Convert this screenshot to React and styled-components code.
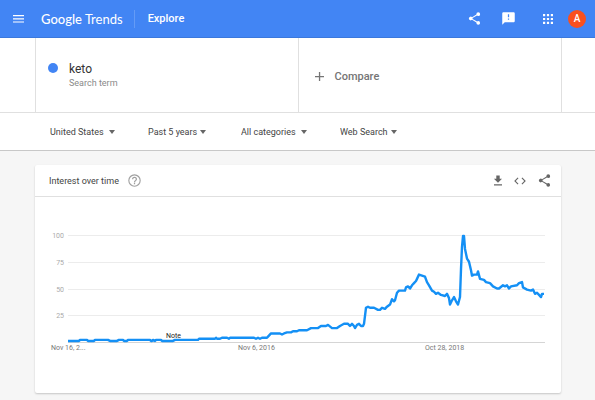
import React, { useState } from "react";
import styled, { createGlobalStyle } from "styled-components";

const GlobalStyle = createGlobalStyle`
  * {
    box-sizing: border-box;
  }
  body {
    margin: 0;
    background: #f6f6f6;
    color: #3c3c3c;
    font-family: Roboto, "Liberation Sans", sans-serif;
  }
  button, select {
    font-family: inherit;
  }
`;

const FILTERS = [
  { label: "Region", value: "United States", width: 59, cell: 98 },
  { label: "Time", value: "Past 5 years", width: 52, cell: 93 },
  { label: "Category", value: "All categories", width: 60, cell: 99 },
  { label: "Search type", value: "Web Search", width: 51, cell: 80 },
];

// [distance along the time axis, interest value]
const SERIES = [
  [0, 1], [11, 1], [12, 2], [19, 2], [20, 1], [26, 1], [27, 2], [40, 2],
  [42, 1], [49, 1], [51, 2], [55, 2], [56, 1], [59, 1], [60, 2], [82, 2],
  [83, 1], [84, 1], [85, 2], [87, 1], [88, 2], [93, 2], [94, 1], [105, 1],
  [107, 2], [130, 2], [131, 3], [147, 3], [148, 4], [149, 3], [152, 3],
  [154, 4], [159, 4], [161, 3], [162, 4], [186, 4], [188, 3], [190, 4],
  [192, 3], [194, 4], [199, 4], [200, 5], [203, 8], [212, 8], [214, 7],
  [216, 8], [219, 9], [223, 9], [225, 10], [229, 10], [231, 11], [239, 11],
  [243, 13], [250, 13], [253, 15], [258, 15], [260, 16], [264, 13],
  [269, 13], [272, 15], [276, 17], [280, 17], [282, 15], [284, 17],
  [286, 15], [287, 13], [289, 16], [291, 17], [293, 15], [295, 15],
  [296, 17], [298, 32], [300, 33], [302, 32], [306, 32], [310, 30],
  [312, 30], [314, 32], [317, 31], [319, 33], [322, 35], [324, 40],
  [326, 38], [327, 39], [329, 46], [331, 48], [337, 48], [338, 51],
  [340, 52], [342, 50], [344, 53], [346, 55], [348, 57], [349, 59],
  [351, 63], [354, 62], [357, 61], [359, 56], [361, 53], [364, 48],
  [366, 47], [368, 45], [370, 46], [373, 44], [377, 43], [379, 45],
  [381, 41], [382, 35], [384, 39], [386, 42], [388, 38], [390, 35],
  [392, 42], [393, 68], [394, 89], [395, 99], [396, 99], [397, 87],
  [399, 78], [401, 75], [403, 67], [404, 62], [406, 63], [409, 63],
  [410, 66], [412, 59], [416, 58], [418, 56], [422, 55], [425, 52],
  [429, 50], [431, 50], [435, 53], [437, 52], [439, 53], [441, 50],
  [443, 52], [449, 53], [451, 55], [454, 56], [455, 51], [459, 49],
  [463, 48], [465, 49], [467, 45], [469, 46], [471, 44], [473, 42],
  [474, 45], [476, 45],
];

const PLOT = { left: 33, right: 510, top: 38, bottom: 145 };

const scaleY = (value) =>
  PLOT.bottom - (value / 100) * (PLOT.bottom - PLOT.top);

const linePoints = SERIES.map(
  ([x, value]) => `${PLOT.left + x},${scaleY(value)}`
).join(" ");

const ShareIcon = ({ size }) => (
  <svg width={size} height={size} viewBox="0 0 24 24" fill="currentColor">
    <path d="M18 16.08c-.76 0-1.44.3-1.96.77L8.91 12.7c.05-.23.09-.46.09-.7s-.04-.47-.09-.7l7.05-4.11c.54.5 1.25.81 2.04.81a3 3 0 1 0-3-3c0 .24.04.47.09.7L8.04 9.81A3 3 0 1 0 6 15c.79 0 1.5-.31 2.04-.81l7.12 4.16c-.05.21-.08.43-.08.65a2.92 2.92 0 1 0 2.92-2.92z" />
  </svg>
);

const Chart = () => (
  <ChartSvg viewBox="0 0 526 196" role="img" aria-label="Interest over time">
    {[25, 50, 75, 100].map((tick) => (
      <g key={tick}>
        <rect
          x={PLOT.left}
          y={Math.round(scaleY(tick))}
          width={PLOT.right - PLOT.left}
          height="1"
          fill="#ececec"
        />
        <AxisText x="29" y={Math.round(scaleY(tick)) + 3} textAnchor="end">
          {tick}
        </AxisText>
      </g>
    ))}
    <rect
      x={PLOT.left}
      y={PLOT.bottom}
      width={PLOT.right - PLOT.left}
      height="1"
      fill="#d5d5d5"
    />
    <DateText x="16" y="153">Nov 16, 2...</DateText>
    <DateText x="203" y="153">Nov 6, 2016</DateText>
    <DateText x="390" y="153">Oct 28, 2018</DateText>
    <polyline
      points={linePoints}
      fill="none"
      stroke="#1490f5"
      strokeWidth="2.4"
      strokeLinejoin="round"
    />
    <NoteText x="131" y="141">Note</NoteText>
  </ChartSvg>
);

const Filter = ({ label, value, width, cell }) => (
  <FilterCell $cell={cell}>
    <FilterSelect aria-label={label} $width={width} defaultValue={value}>
      <option>{value}</option>
    </FilterSelect>
    <svg width="6" height="4" viewBox="0 0 6 4" fill="#666">
      <path d="M0 0h6L3 4z" />
    </svg>
  </FilterCell>
);

const App = () => {
  const [showHelp, setShowHelp] = useState(false);

  return (
    <>
      <GlobalStyle />
      <Header>
        <IconButton aria-label="Main menu">
          <svg width="11" height="8" viewBox="0 0 11 8" fill="currentColor">
            <path d="M0 0h11v1.2H0zM0 3.2h11v1.2H0zM0 6.4h11v1.2H0z" />
          </svg>
        </IconButton>
        <Logo href="#home">
          <strong>Google</strong> Trends
        </Logo>
        <Explore href="#explore">Explore</Explore>
        <HeaderActions>
          <IconButton aria-label="Share">
            <ShareIcon size={15} />
          </IconButton>
          <IconButton aria-label="Send feedback">
            <svg width="15" height="15" viewBox="0 0 24 24" fill="currentColor">
              <path d="M20 2H4c-1.1 0-2 .9-2 2v18l4-4h14c1.1 0 2-.9 2-2V4c0-1.1-.9-2-2-2zm-7 12h-2v-2h2v2zm0-4h-2V5h2v5z" />
            </svg>
          </IconButton>
          <AppsButton aria-label="Google apps">
            <svg width="10" height="10" viewBox="0 0 10 10" fill="currentColor">
              <path d="M0 0h2.2v2.2H0zM3.9 0h2.2v2.2H3.9zM7.8 0H10v2.2H7.8zM0 3.9h2.2v2.2H0zM3.9 3.9h2.2v2.2H3.9zM7.8 3.9H10v2.2H7.8zM0 7.8h2.2V10H0zM3.9 7.8h2.2V10H3.9zM7.8 7.8H10V10H7.8z" />
            </svg>
          </AppsButton>
          <Avatar aria-label="Account">A</Avatar>
        </HeaderActions>
      </Header>

      <Terms>
        <Term>
          <Dot />
          <div>
            <TermName>keto</TermName>
            <TermKind>Search term</TermKind>
          </div>
        </Term>
        <Compare>
          <svg width="9" height="9" viewBox="0 0 9 9" fill="currentColor">
            <path d="M3.9 0h1.3v3.9H9v1.3H5.2V9H3.9V5.2H0V3.9h3.9z" />
          </svg>
          Compare
        </Compare>
      </Terms>

      <Filters>
        {FILTERS.map((filter) => (
          <Filter key={filter.label} {...filter} />
        ))}
      </Filters>

      <Main>
        <Card>
          <CardHeader>
            <CardTitle>Interest over time</CardTitle>
            <HelpButton
              aria-label="Help"
              aria-expanded={showHelp}
              onClick={() => setShowHelp(!showHelp)}
            >
              <svg width="15" height="15" viewBox="0 0 24 24" fill="currentColor">
                <path d="M11 18h2v-2h-2v2zm1-16a10 10 0 1 0 0 20 10 10 0 0 0 0-20zm0 18.2a8.2 8.2 0 1 1 0-16.4 8.2 8.2 0 0 1 0 16.4zM12 6a4 4 0 0 0-4 4h2c0-1.1.9-2 2-2s2 .9 2 2c0 2-3 1.75-3 5h2c0-2.25 3-2.5 3-5a4 4 0 0 0-4-4z" />
              </svg>
            </HelpButton>
            <CardActions>
              <IconButton aria-label="Download CSV">
                <svg width="10" height="11" viewBox="0 0 10 11" fill="currentColor">
                  <path d="M3.3 0.5h3.4v3.3h2.3L5 7.7.9 3.8h2.4zM1 9.2h8v1.3H1z" />
                </svg>
              </IconButton>
              <IconButton aria-label="Embed">
                <svg width="14" height="14" viewBox="0 0 24 24" fill="currentColor">
                  <path d="M9.4 16.6 4.8 12l4.6-4.6L8 6l-6 6 6 6zm5.2 0 4.6-4.6-4.6-4.6L16 6l6 6-6 6z" />
                </svg>
              </IconButton>
              <IconButton aria-label="Share chart">
                <ShareIcon size={15} />
              </IconButton>
            </CardActions>
          </CardHeader>
          <Chart />
        </Card>
      </Main>
    </>
  );
};

const Header = styled.header`
  display: flex;
  align-items: center;
  height: 38px;
  padding: 0 9px 0 13px;
  background: #4285f4;
  border-bottom: 1px solid #3b78dc;
  color: #fff;
`;

const IconButton = styled.button`
  display: flex;
  align-items: center;
  justify-content: center;
  padding: 0;
  border: 0;
  background: none;
  color: inherit;
  cursor: pointer;
`;

const Logo = styled.a`
  padding: 0 11px 0 17px;
  color: #fff;
  font-family: Lato, sans-serif;
  font-size: 13px;
  line-height: 18px;
  text-decoration: none;
  white-space: nowrap;

  strong {
    font-weight: 500;
  }
`;

const Explore = styled.a`
  padding-left: 13px;
  border-left: 1px solid #649bf6;
  color: #fff;
  font-size: 11px;
  font-weight: 500;
  line-height: 18px;
  text-decoration: none;
`;

const HeaderActions = styled.div`
  display: flex;
  align-items: center;
  gap: 19px;
  margin-left: auto;
`;

const AppsButton = styled(IconButton)`
  margin-left: 8px;
`;

const Avatar = styled(IconButton)`
  width: 18px;
  height: 18px;
  margin-left: -4px;
  border-radius: 50%;
  background: #f9501f;
  color: #fff;
  font-size: 10px;
  font-weight: 500;
`;

const Terms = styled.section`
  display: grid;
  grid-template-columns: 1fr 1fr;
  height: 75px;
  padding: 0 33px 0 35px;
  background: #fff;
  border-bottom: 1px solid #e0e0e0;
`;

const Term = styled.div`
  display: flex;
  align-items: flex-start;
  gap: 11px;
  padding: 24px 12px;
  border-left: 1px solid #e0e0e0;
  border-right: 1px solid #e0e0e0;
`;

const Dot = styled.span`
  width: 10px;
  height: 10px;
  margin-top: 1px;
  border-radius: 50%;
  background: #4285f4;
`;

const TermName = styled.div`
  color: #333;
  font-size: 12px;
  line-height: 15px;
`;

const TermKind = styled.div`
  color: #8a8a8a;
  font-size: 9px;
  line-height: 12px;
`;

const Compare = styled.button`
  display: flex;
  align-items: center;
  gap: 11px;
  padding: 2px 16px 0;
  border: 0;
  border-right: 1px solid #e0e0e0;
  background: none;
  color: #757575;
  font-size: 11px;
  font-weight: 500;
  cursor: pointer;
`;

const Filters = styled.nav`
  display: flex;
  align-items: center;
  height: 38px;
  padding-left: 50px;
  background: #fff;
  border-bottom: 1px solid #c8c8c8;
`;

const FilterCell = styled.div`
  display: flex;
  align-items: center;
  width: ${(props) => props.$cell}px;
`;

const FilterSelect = styled.select`
  width: ${(props) => props.$width}px;
  padding: 0;
  border: 0;
  background: none;
  color: #444;
  font-size: 9px;
  line-height: 12px;
  appearance: none;
  cursor: pointer;
`;

const Main = styled.main`
  padding: 14px 34px 7px 35px;
`;

const Card = styled.section`
  background: #fff;
  border-radius: 2px;
  box-shadow: 0 1px 2px rgba(0, 0, 0, 0.2);
`;

const CardHeader = styled.div`
  display: flex;
  align-items: center;
  height: 32px;
  padding: 0 9px 0 14px;
  border-bottom: 1px solid #e0e0e0;
`;

const CardTitle = styled.h2`
  margin: 0;
  color: #444;
  font-size: 9px;
  font-weight: 400;
  line-height: 12px;
`;

const HelpButton = styled(IconButton)`
  margin-left: 8px;
  color: #a0a0a0;
`;

const CardActions = styled.div`
  display: flex;
  align-items: center;
  gap: 10px;
  margin-left: auto;
  color: #666;
`;

const ChartSvg = styled.svg`
  display: block;
  width: 100%;
  height: auto;
`;

const AxisText = styled.text`
  fill: #aaa;
  font-size: 7px;
`;

const DateText = styled.text`
  fill: #777;
  font-size: 7px;
`;

const NoteText = styled.text`
  fill: #222;
  font-size: 7px;
`;

export default App;
